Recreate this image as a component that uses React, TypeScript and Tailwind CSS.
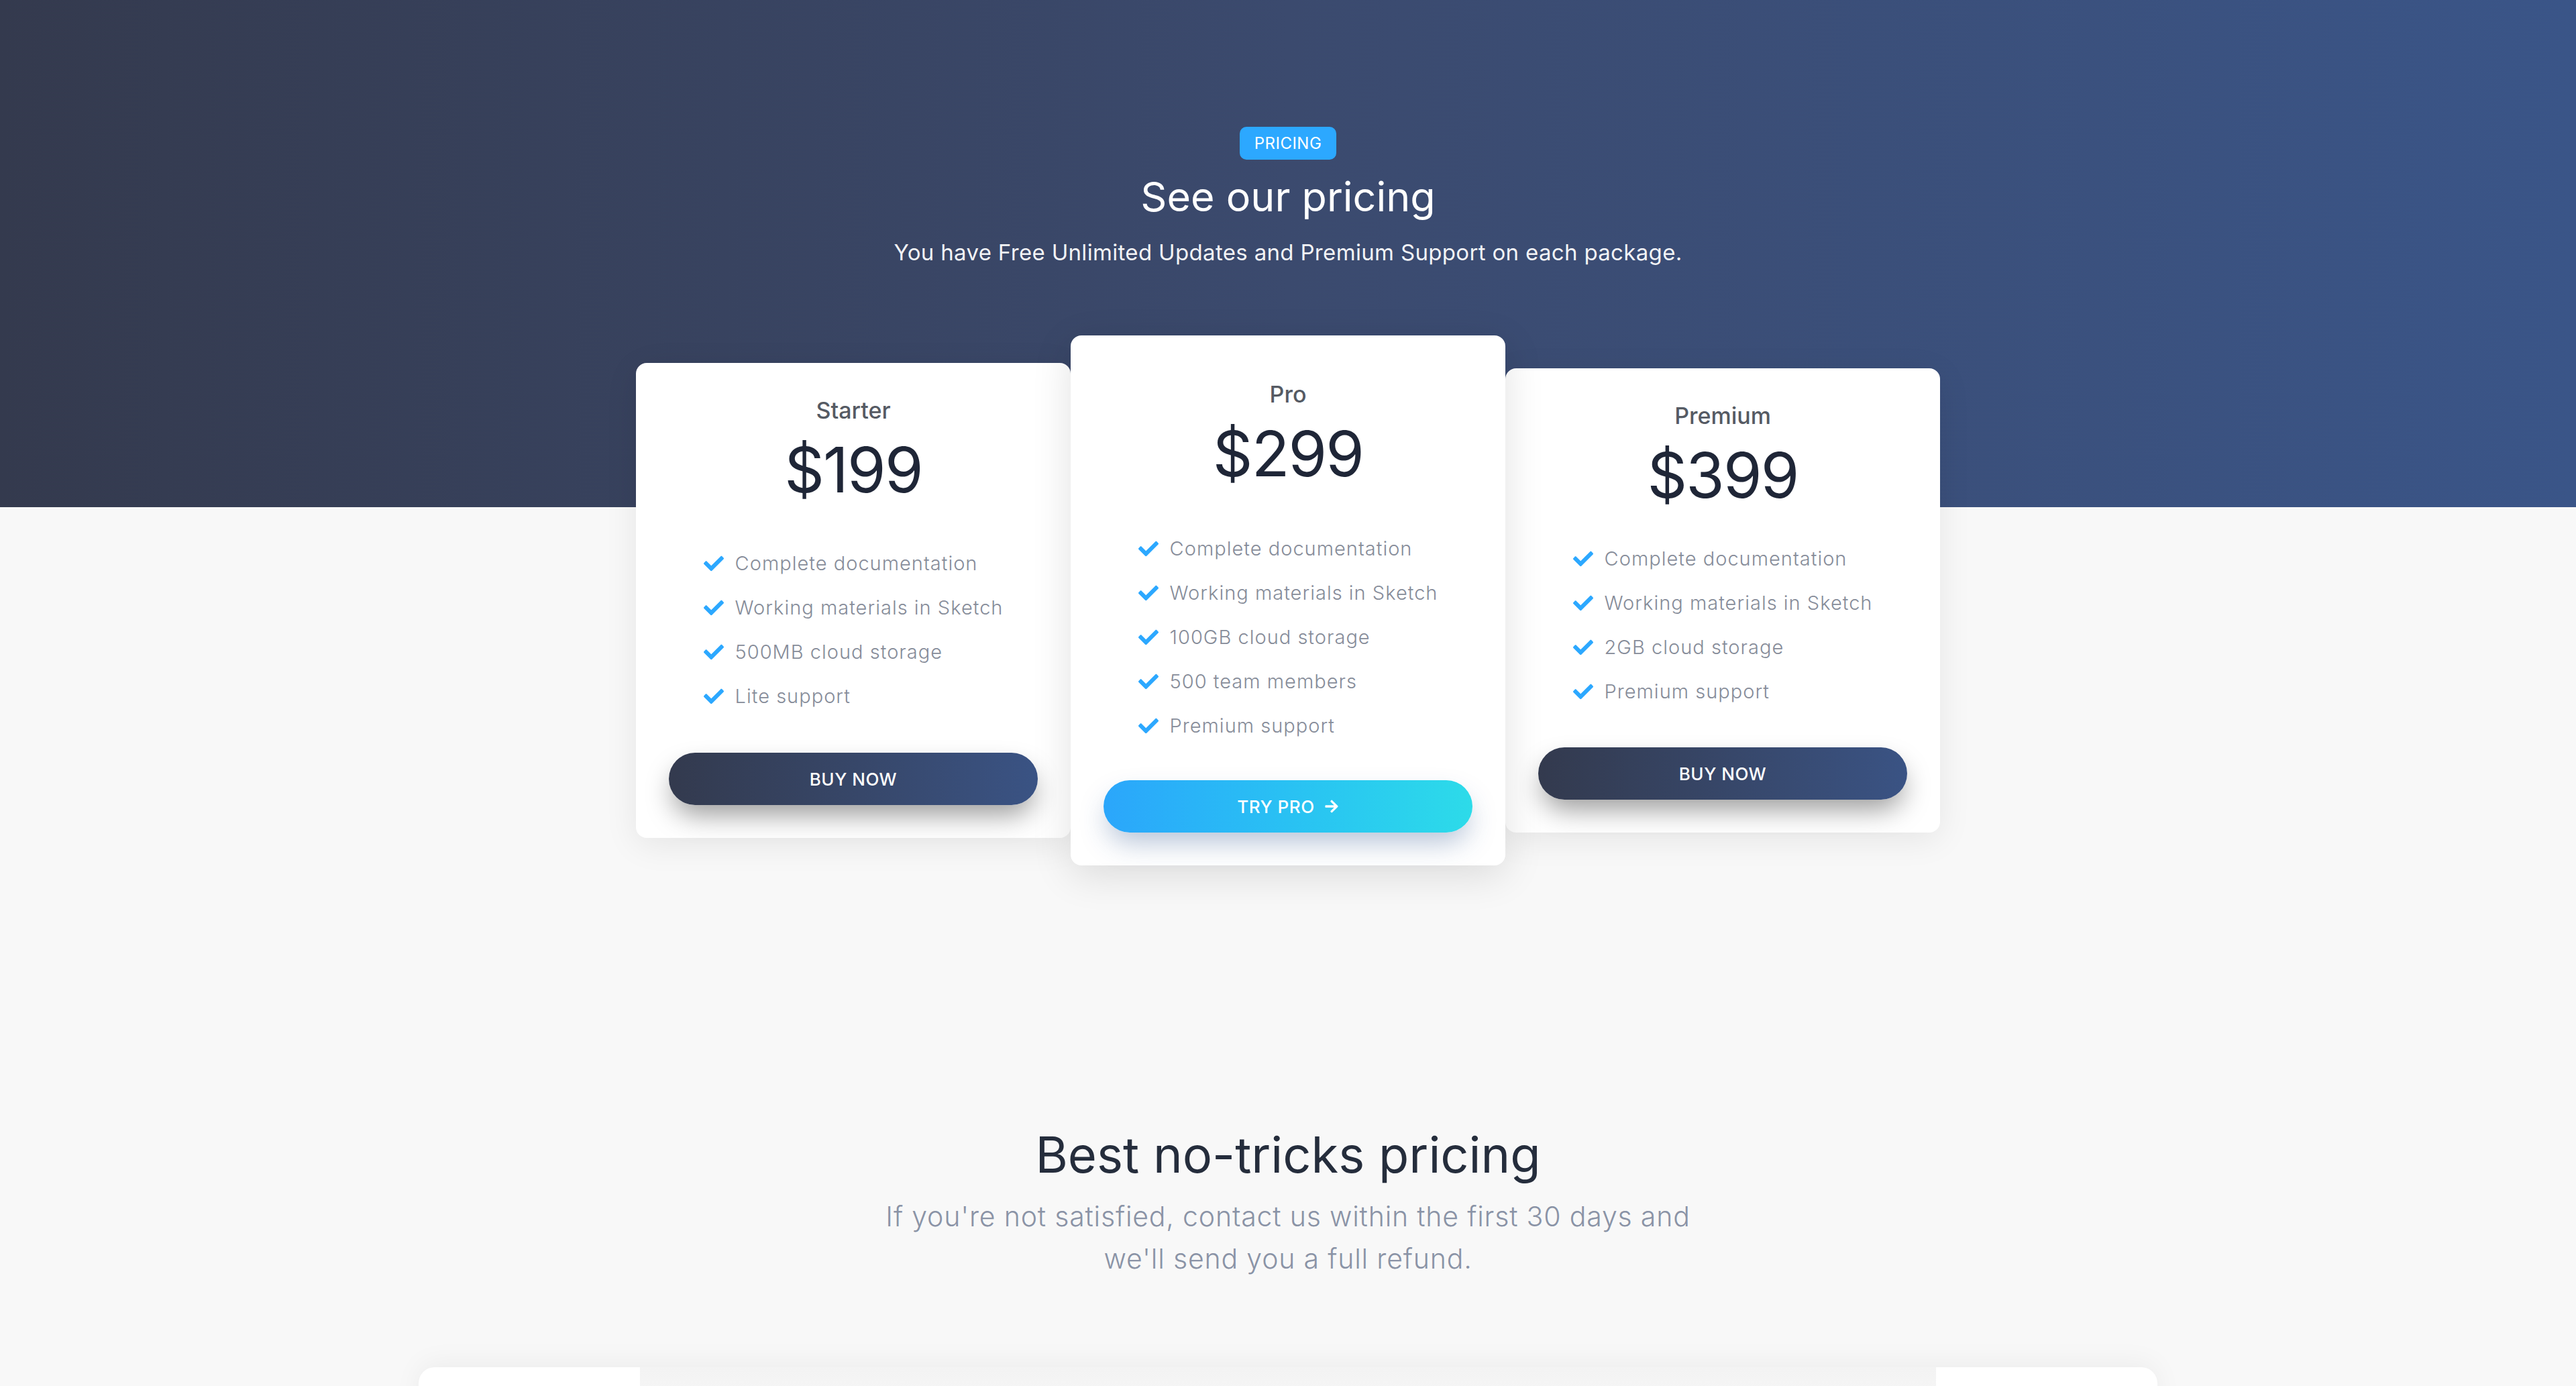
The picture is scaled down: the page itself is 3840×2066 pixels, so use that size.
import { FaArrowRight, FaCheck } from "react-icons/fa";

type Plan = {
  name: string;
  price: string;
  features: string[];
  cardPad: string;
  listGap: string;
  buttonGap: string;
  highlight?: boolean;
};

const plans: Plan[] = [
  {
    name: "Starter",
    price: "$199",
    features: [
      "Complete documentation",
      "Working materials in Sketch",
      "500MB cloud storage",
      "Lite support",
    ],
    cardPad: "pt-[47px]",
    listGap: "mt-[53px]",
    buttonGap: "mt-[51px]",
  },
  {
    name: "Pro",
    price: "$299",
    features: [
      "Complete documentation",
      "Working materials in Sketch",
      "100GB cloud storage",
      "500 team members",
      "Premium support",
    ],
    cardPad: "pt-[64px]",
    listGap: "mt-[55px]",
    buttonGap: "mt-[48px]",
    highlight: true,
  },
  {
    name: "Premium",
    price: "$399",
    features: [
      "Complete documentation",
      "Working materials in Sketch",
      "2GB cloud storage",
      "Premium support",
    ],
    cardPad: "pt-[47px]",
    listGap: "mt-[38px]",
    buttonGap: "mt-[50px]",
  },
];

const PricingCard = ({ plan }: { plan: Plan }) => {
  return (
    <div
      className={`flex flex-col items-center rounded-[16px] bg-white px-[49px] pb-[49px] ${plan.cardPad} ${
        plan.highlight
          ? "relative z-10 shadow-[0_14px_60px_rgba(0,0,0,0.12)]"
          : "shadow-[0_10px_50px_rgba(0,0,0,0.08)]"
      }`}
    >
      <h6 className="text-[34px] leading-[48px] font-medium text-[#555a63]">
        {plan.name}
      </h6>
      <h2 className="mt-[10px] text-[93px] leading-[108px] font-normal tracking-[-0.02em] text-[#1f2637]">
        {plan.price}
      </h2>
      <ul className={`${plan.listGap} flex flex-col items-start`}>
        {plan.features.map((feature) => (
          <li key={feature} className="flex h-[66px] items-center gap-[17px]">
            <FaCheck className="h-[30px] w-[30px] shrink-0 text-[#2ca8ff]" />
            <span className="text-[29px] font-light tracking-[0.035em] text-[#868c99]">
              {feature}
            </span>
          </li>
        ))}
      </ul>
      {plan.highlight ? (
        <button
          className={`${plan.buttonGap} flex h-[78px] w-full items-center justify-center gap-[14px] rounded-full bg-gradient-to-r from-[#2ba6fb] to-[#2ddbe9] text-[26px] font-medium tracking-[0.02em] text-white shadow-[0_20px_40px_-6px_rgba(40,80,140,0.35)]`}
        >
          TRY PRO
          <FaArrowRight className="h-[22px] w-[22px]" />
        </button>
      ) : (
        <button
          className={`${plan.buttonGap} flex h-[78px] w-full items-center justify-center rounded-full bg-gradient-to-r from-[#333a4e] to-[#3a5384] text-[26px] font-medium tracking-[0.02em] text-white shadow-[0_20px_40px_-6px_rgba(0,0,0,0.4)]`}
        >
          BUY NOW
        </button>
      )}
    </div>
  );
};

export default function App() {
  return (
    <div className="min-h-screen overflow-hidden bg-[#f8f8f8] font-['Inter','Noto_Sans',sans-serif]">
      <div className="flex h-[756px] flex-col items-center bg-gradient-to-r from-[#343a4e] via-[#3b4a6e] to-[#3a5588] pt-[189px]">
        <span className="inline-flex h-[49px] items-center rounded-[10px] bg-[#2ca8ff] px-[22px] text-[24px] font-normal tracking-[0.02em] text-white">
          PRICING
        </span>
        <h2 className="mt-[20px] text-[61px] leading-[71px] font-normal text-white">
          See our pricing
        </h2>
        <p className="mt-[22px] text-[33px] leading-[50px] font-normal tracking-[0.01em] text-white/95">
          You have Free Unlimited Updates and Premium Support on each package.
        </p>
      </div>

      <div className="relative mx-auto -mt-[256px] grid w-[1944px] grid-cols-3 items-center">
        {plans.map((plan) => (
          <PricingCard key={plan.name} plan={plan} />
        ))}
      </div>

      <div className="mt-[388px] flex flex-col items-center text-center">
        <h2 className="text-[74px] leading-[86px] font-normal text-[#252d3c]">
          Best no-tricks pricing
        </h2>
        <p className="mt-[18px] text-[41px] leading-[63px] font-light tracking-[0.02em] text-[#8a93a6]">
          If you're not satisfied, contact us within the first 30 days and
          <br />
          we'll send you a full refund.
        </p>
      </div>

      <div className="mx-auto mt-[130px] h-[600px] w-[2592px] rounded-t-[24px] bg-white shadow-[0_-6px_40px_rgba(0,0,0,0.05)]">
        <div className="mx-[330px] h-[200px] bg-gradient-to-b from-[#f3f3f3] to-white" />
      </div>
    </div>
  );
}
